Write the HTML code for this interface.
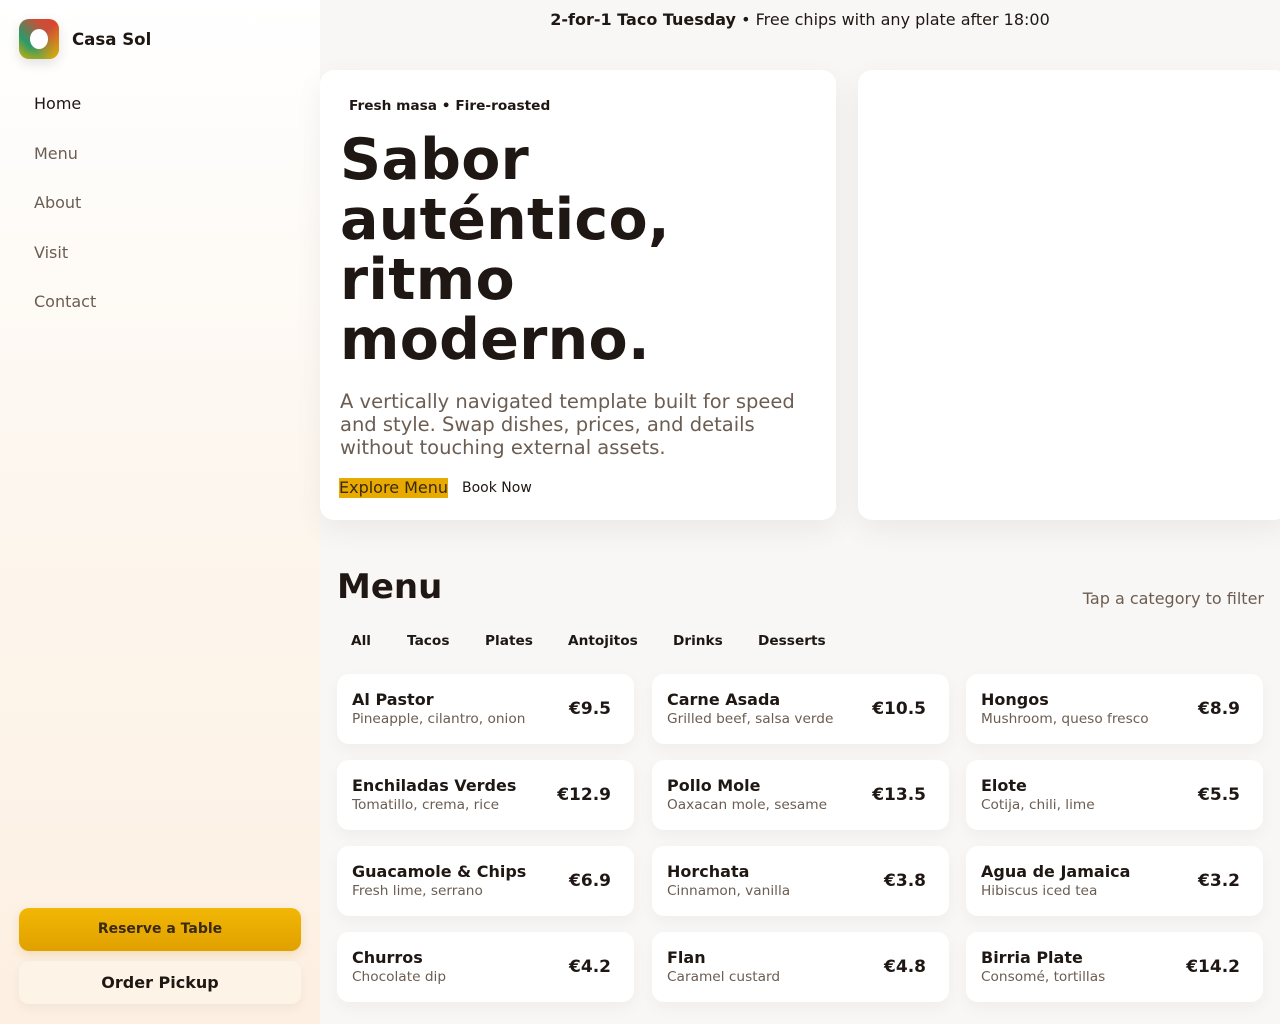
<!DOCTYPE html><html><head><meta charset="utf-8"><style>
*{box-sizing:border-box;margin:0;padding:0}
body{width:1280px;height:1024px;overflow:hidden;font-family:"DejaVu Sans","Liberation Sans",sans-serif;background:#f9f7f5;color:#1e1714;position:relative}
.side{position:absolute;left:0;top:0;width:320px;height:1024px;background:linear-gradient(180deg,#ffffff 0%,#fdf6ee 50%,#fdf0e2 100%)}
.logo{position:absolute;left:19px;top:19px;width:40px;height:40px;border-radius:10px;background:linear-gradient(225deg,#e0402a 0%,#c8503a 30%,#2a9a6a 70%,#d8b000 100%);box-shadow:0 4px 12px rgba(0,0,0,.12);overflow:hidden}
.logo:before{content:"";position:absolute;inset:0;background:linear-gradient(135deg,rgba(0,0,0,0) 50%,#e8b000 100%)}
.logo:after{content:"";position:absolute;left:11px;top:10px;width:18px;height:20px;border-radius:50%;background:#fff}
.brand{position:absolute;left:72px;top:30px;font-weight:bold;font-size:16.6px}
.nav a{position:absolute;left:34px;font-size:16px;color:#6b5d52;text-decoration:none}
.btn1{position:absolute;left:19px;top:908px;width:282px;height:43px;border-radius:10px;background:linear-gradient(#f2b705,#e0a000);font-weight:bold;font-size:14px;color:#3a2a10;text-align:center;line-height:43px;box-shadow:0 4px 10px rgba(200,140,0,.2)}
.btn2{position:absolute;left:19px;top:961px;width:282px;height:43px;border-radius:10px;background:#fdf3e6;font-weight:bold;font-size:16px;text-align:center;line-height:43px;box-shadow:0 4px 12px rgba(0,0,0,.05)}
.banner{position:absolute;left:320px;width:960px;top:10px;text-align:center;font-size:16px}
.hero{position:absolute;left:320px;top:70px;width:516px;height:450px;background:#fff;border-radius:14px;box-shadow:0 10px 30px rgba(0,0,0,.06)}
.card2{position:absolute;left:858px;top:70px;width:430px;height:450px;background:#fff;border-radius:14px;box-shadow:0 10px 30px rgba(0,0,0,.06)}
.kick{position:absolute;left:29px;top:28px;font-size:13.7px;font-weight:bold}
h1{position:absolute;left:20px;top:60px;font-size:57px;line-height:60px;font-weight:bold;letter-spacing:0.3px}
.p{position:absolute;left:20px;top:320px;width:470px;font-size:19.5px;line-height:23px;color:#6b5d52}
.ex{position:absolute;left:19px;top:408px;font-size:16px;background:#e8a900;color:#3a2a10;line-height:20px}
.bk{position:absolute;left:142px;top:409px;font-size:14px;line-height:18px}
.mh{position:absolute;left:337px;top:567px;font-size:34px;font-weight:bold}
.tap{position:absolute;right:16px;top:589px;font-size:16px;color:#6b5d52}
.tabs span{position:absolute;top:633px;font-size:13.7px;font-weight:bold}
.it{position:absolute;width:297px;height:70px;background:#fff;border-radius:12px;box-shadow:0 6px 16px rgba(0,0,0,.04)}
.it b{position:absolute;left:15px;top:16px;font-size:16px}
.it i{position:absolute;left:15px;top:37px;font-size:13.7px;font-style:normal;color:#6b5d52}
.it em{position:absolute;right:23px;top:25px;font-size:17px;font-weight:bold;font-style:normal}
</style></head><body>
<div class="side">
<div class="logo"></div><div class="brand">Casa Sol</div>
<div class="nav"><a style="top:94px;color:#1e1714">Home</a><a style="top:144px">Menu</a><a style="top:193px">About</a><a style="top:243px">Visit</a><a style="top:292px">Contact</a></div>
<div class="btn1">Reserve a Table</div><div class="btn2">Order Pickup</div>
</div>
<div class="banner"><b>2-for-1 Taco Tuesday</b> • Free chips with any plate after 18:00</div>
<div class="hero">
<div class="kick">Fresh masa • Fire-roasted</div>
<h1>Sabor<br>auténtico,<br>ritmo<br>moderno.</h1>
<div class="p">A vertically navigated template built for speed and style. Swap dishes, prices, and details without touching external assets.</div>
<div class="ex">Explore Menu</div><div class="bk">Book Now</div>
</div>
<div class="card2"></div>
<div class="mh">Menu</div><div class="tap">Tap a category to filter</div>
<div class="tabs"><span style="left:351px">All</span><span style="left:407px">Tacos</span><span style="left:485px">Plates</span><span style="left:568px">Antojitos</span><span style="left:673px">Drinks</span><span style="left:758px">Desserts</span></div>
<div class="it" style="left:337px;top:674px"><b>Al Pastor</b><i>Pineapple, cilantro, onion</i><em>€9.5</em></div>
<div class="it" style="left:652px;top:674px"><b>Carne Asada</b><i>Grilled beef, salsa verde</i><em>€10.5</em></div>
<div class="it" style="left:966px;top:674px"><b>Hongos</b><i>Mushroom, queso fresco</i><em>€8.9</em></div>
<div class="it" style="left:337px;top:760px"><b>Enchiladas Verdes</b><i>Tomatillo, crema, rice</i><em>€12.9</em></div>
<div class="it" style="left:652px;top:760px"><b>Pollo Mole</b><i>Oaxacan mole, sesame</i><em>€13.5</em></div>
<div class="it" style="left:966px;top:760px"><b>Elote</b><i>Cotija, chili, lime</i><em>€5.5</em></div>
<div class="it" style="left:337px;top:846px"><b>Guacamole &amp; Chips</b><i>Fresh lime, serrano</i><em>€6.9</em></div>
<div class="it" style="left:652px;top:846px"><b>Horchata</b><i>Cinnamon, vanilla</i><em>€3.8</em></div>
<div class="it" style="left:966px;top:846px"><b>Agua de Jamaica</b><i>Hibiscus iced tea</i><em>€3.2</em></div>
<div class="it" style="left:337px;top:932px"><b>Churros</b><i>Chocolate dip</i><em>€4.2</em></div>
<div class="it" style="left:652px;top:932px"><b>Flan</b><i>Caramel custard</i><em>€4.8</em></div>
<div class="it" style="left:966px;top:932px"><b>Birria Plate</b><i>Consomé, tortillas</i><em>€14.2</em></div>
</body></html>
